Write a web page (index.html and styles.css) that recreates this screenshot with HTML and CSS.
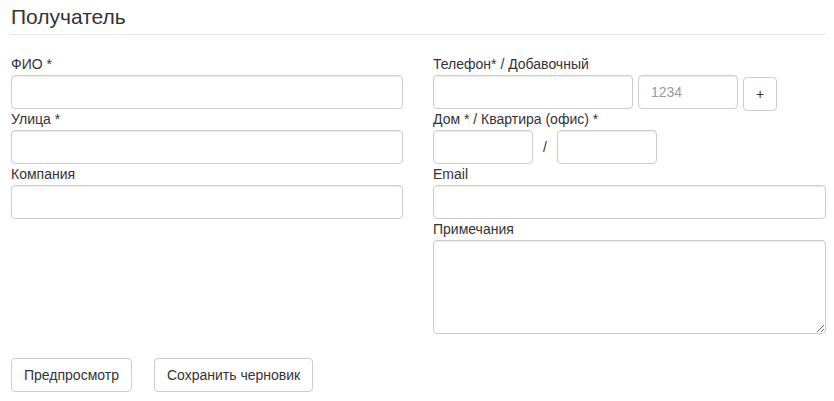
FILE: index.html
```html
<!DOCTYPE html>
<html lang="ru">
<head>
<meta charset="utf-8">
<link rel="stylesheet" href="styles.css">
</head>
<body>
<div class="page">
  <h2 class="title">Получатель</h2>
  <div class="grid">
    <div class="col">
      <div class="field">
        <label class="label">ФИО *</label>
        <input class="input" type="text">
      </div>
      <div class="field">
        <label class="label">Улица *</label>
        <input class="input" type="text">
      </div>
      <div class="field">
        <label class="label">Компания</label>
        <input class="input" type="text">
      </div>
    </div>
    <div class="col">
      <div class="field">
        <label class="label">Телефон* / Добавочный</label>
        <div class="row">
          <input class="input w200" type="text">
          <input class="input w100" type="text" placeholder="1234">
          <button class="btn btn-plus" type="button">+</button>
        </div>
      </div>
      <div class="field">
        <label class="label">Дом * / Квартира (офис) *</label>
        <div class="row">
          <input class="input w100" type="text">
          <span class="slash">/</span>
          <input class="input w100" type="text">
        </div>
      </div>
      <div class="field">
        <label class="label">Email</label>
        <input class="input" type="text">
      </div>
      <div class="field">
        <label class="label">Примечания</label>
        <textarea class="input textarea" rows="4"></textarea>
      </div>
    </div>
  </div>
  <div class="actions">
    <button class="btn" type="button">Предпросмотр</button>
    <button class="btn" type="button">Сохранить черновик</button>
  </div>
</div>
</body>
</html>
```
FILE: styles.css
```css
* { box-sizing: border-box; }
html, body { margin: 0; background: #fff; }
body {
  font-family: "Liberation Sans", Arial, sans-serif;
  font-size: 14px;
  line-height: 20px;
  color: #333;
}
.page {
  padding: 0 8px 0 11px;
}
.title {
  margin: 0;
  padding: 6px 0 6px 0;
  font-size: 21px;
  font-weight: normal;
  line-height: 22px;
  color: #333;
  border-bottom: 1px solid #e5e5e5;
}
.grid {
  display: grid;
  grid-template-columns: 392px 393px;
  column-gap: 30px;
  margin-top: 19px;
}
.col {
  display: flex;
  flex-direction: column;
}
.field {
  display: flex;
  flex-direction: column;
}
.label {
  display: block;
  line-height: 21px;
  height: 21px;
  color: #333;
}
.input {
  display: block;
  width: 100%;
  height: 34px;
  padding: 6px 12px;
  font-family: inherit;
  font-size: 14px;
  line-height: 20px;
  color: #555;
  background: #fff;
  border: 1px solid #ccc;
  border-radius: 4px;
  box-shadow: inset 0 1px 1px rgba(0,0,0,.075);
  margin: 0;
}
.input::placeholder { color: #999; }
.textarea {
  height: 94px;
  resize: vertical;
}
.row {
  display: flex;
  align-items: flex-start;
  gap: 5px;
  height: 34px;
}
.w200 { width: 200px; flex: none; }
.w100 { width: 100px; flex: none; }
.slash {
  width: 24px;
  text-align: center;
  line-height: 34px;
  margin: 0 -5px;
  flex: none;
}
.btn {
  display: inline-block;
  height: 34px;
  padding: 6px 12px;
  font-family: inherit;
  font-size: 14px;
  line-height: 20px;
  color: #333;
  background: #fff;
  border: 1px solid #ccc;
  border-radius: 4px;
  cursor: pointer;
  margin: 0;
}
.btn-plus {
  width: 34px;
  padding: 6px 0;
  margin-top: 2px;
  text-align: center;
}
.actions {
  display: flex;
  gap: 22px;
  margin-top: 24px;
}
```
